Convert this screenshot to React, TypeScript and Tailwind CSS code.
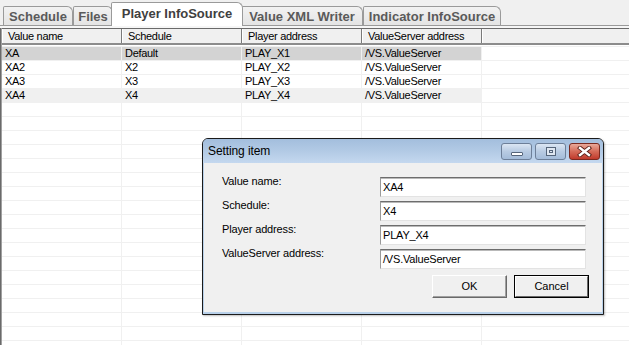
import React from "react";

const data = [
  ["XA", "Default", "PLAY_X1", "/VS.ValueServer"],
  ["XA2", "X2", "PLAY_X2", "/VS.ValueServer"],
  ["XA3", "X3", "PLAY_X3", "/VS.ValueServer"],
  ["XA4", "X4", "PLAY_X4", "/VS.ValueServer"],
];

function Tab({ w, children }: { w: string; children: React.ReactNode }) {
  return (
    <div
      className={`${w} h-[19px] border border-b-0 border-[#9a9a9a] rounded-tl-[2px] rounded-tr-[6px] bg-gradient-to-b from-[#f2f2f2] to-[#e4e4e4] flex items-center justify-center text-[13px] font-bold text-[#5a5a5a] leading-[17px] whitespace-nowrap`}
    >
      {children}
    </div>
  );
}

function Field({ label, value }: { label: string; value: string }) {
  return (
    <div className="flex items-start h-[23px]">
      <div className="w-[158px] h-[14px] leading-[14px] text-[11px] tracking-[-0.15px] text-black">{label}</div>
      <div className="mt-[3px] w-[206px] h-[20px] bg-white border border-t-[#6d6d6d] border-l-[#9a9a9a] border-r-[#e3e3e3] border-b-[#e3e3e3] shadow-[inset_0_1px_0_#b9b9b9] pl-[2px] flex items-center text-[11px] tracking-[-0.2px] text-black leading-[14px]">
        {value}
      </div>
    </div>
  );
}

export default function App() {
  const emptyRows = Array.from({ length: 20 }, (_, i) => i);
  return (
    <div className="relative w-[629px] h-[345px] overflow-hidden bg-[#f0f0f0] font-['Liberation_Sans',Arial,sans-serif]">
      {/* Tab strip */}
      <div className="flex items-end h-[26px] pl-[3px] border-b border-[#9a9a9a]">
        <Tab w="w-[70px]">Schedule</Tab>
        <Tab w="w-[40px]">Files</Tab>
        <div className="relative z-10 -mx-[2px] -mb-[1px] w-[132px] h-[24px] border border-b-0 border-[#9a9a9a] rounded-tl-[2px] rounded-tr-[6px] bg-white flex items-start justify-center pt-[3px] text-[13px] font-bold text-[#404040] leading-[16px] whitespace-nowrap">
          Player InfoSource
        </div>
        <Tab w="w-[122px]">Value XML Writer</Tab>
        <Tab w="w-[138px]">Indicator InfoSource</Tab>
      </div>
      <div className="h-[2px] bg-[#f6f6f6]" />

      {/* Grid */}
      <div className="border-l border-[#6a6a6a] h-[320px]">
        <div className="border-l border-[#a0a0a0] h-full bg-white">
          <div className="flex h-[17px] border-t border-[#6a6a6a] border-b-2 border-b-[#8c8c8c] bg-[#f0f0f0] text-[11px] tracking-[-0.3px] text-black leading-[14px]">
            {["Value name", "Schedule", "Player address", "ValueServer address"].map((h) => (
              <div key={h} className="w-[120px] border-l border-white border-r border-r-[#7a7a7a] pl-[5px] flex items-center">
                {h}
              </div>
            ))}
            <div className="flex-1 border-l border-white" />
          </div>
          <div className="h-[1px]" />
          <div className="border-t border-[#f0f0f0]">
            {data.map((r, i) => (
              <div
                key={i}
                className={`flex h-[14px] border-b border-[#f0f0f0] text-[11px] tracking-[-0.3px] text-black leading-[13px]`}
              >
                {r.map((c, j) => (
                  <div
                    key={j}
                    className={`w-[120px] border-r border-[#f0f0f0] pl-[3px] whitespace-nowrap ${
                      i === 0 ? "bg-[#d3d3d3]" : i === 3 ? "bg-[#f0f0f0]" : ""
                    }`}
                  >
                    {c}
                  </div>
                ))}
                <div className="flex-1" />
              </div>
            ))}
            {emptyRows.map((i) => (
              <div key={i} className="flex h-[14px] border-b border-[#f0f0f0]">
                <div className="w-[120px] border-r border-[#f0f0f0]" />
                <div className="w-[120px] border-r border-[#f0f0f0]" />
                <div className="w-[120px] border-r border-[#f0f0f0]" />
                <div className="w-[120px] border-r border-[#f0f0f0]" />
                <div className="flex-1" />
              </div>
            ))}
          </div>
        </div>
      </div>

      {/* Dialog */}
      <div className="absolute left-[202px] top-[138px] w-[402px] h-[177px] border border-[#1b1b1b] rounded-t-[6px] flex flex-col overflow-hidden bg-[#b9d1ea] shadow-[1px_1px_2px_rgba(0,0,0,0.25)]">
        <div className="h-[24px] flex items-start bg-gradient-to-b from-[#a3bedd] via-[#b2cae5] to-[#c4d8ef]">
          <div className="flex-1 pl-[5px] leading-[24px] text-[12px] text-black tracking-[-0.1px]">Setting item</div>
          <div className="flex gap-[3px] pt-[4px] pr-[3px]">
            <div className="w-[31px] h-[17px] rounded-[3px] border border-[#6d7f98] bg-gradient-to-b from-[#dbe6f3] via-[#b8cbe2] to-[#a4bcd9] flex items-end justify-center pb-[3px]">
              <div className="w-[12px] h-[4px] bg-white border border-[#55657a] rounded-[1px]" />
            </div>
            <div className="w-[31px] h-[17px] rounded-[3px] border border-[#6d7f98] bg-gradient-to-b from-[#dbe6f3] via-[#b8cbe2] to-[#a4bcd9] flex items-center justify-center">
              <div className="w-[10px] h-[9px] border border-[#55657a] bg-[#dfe7f1] flex items-center justify-center">
                <div className="w-[4px] h-[3px] border border-[#55657a]" />
              </div>
            </div>
            <div className="w-[31px] h-[17px] rounded-[3px] border border-[#7a2a20] bg-gradient-to-b from-[#e9a99a] via-[#d46a58] to-[#c0392b] flex items-center justify-center">
              <svg width="15" height="11" viewBox="0 0 15 11">
                <path d="M3 2 L12 9 M12 2 L3 9" stroke="#5a2018" strokeWidth="4.2" strokeLinecap="square" />
                <path d="M3 2 L12 9 M12 2 L3 9" stroke="#ffffff" strokeWidth="2.4" strokeLinecap="square" />
              </svg>
            </div>
          </div>
        </div>
        <div className="flex-1 mx-[1px] mb-[2px] bg-[#f0f0f0] pl-[18px] pt-[11px] flex flex-col">
          <div className="flex flex-col gap-[1px]">
            <Field label="Value name:" value="XA4" />
            <Field label="Schedule:" value="X4" />
            <Field label="Player address:" value="PLAY_X4" />
            <Field label="ValueServer address:" value="/VS.ValueServer" />
          </div>
          <div className="w-[367px] flex justify-end gap-[7px] mt-[6px]">
            <div className="w-[75px] h-[23px] bg-[#f0f0f0] border border-t-white border-l-white border-r-[#696969] border-b-[#696969] shadow-[inset_-1px_-1px_0_#a0a0a0] flex items-center justify-center text-[11px] text-black">
              OK
            </div>
            <div className="w-[75px] h-[23px] border border-black">
              <div className="w-full h-full bg-[#f0f0f0] border border-t-white border-l-white border-r-[#696969] border-b-[#696969] flex items-center justify-center text-[11px] text-black">
                Cancel
              </div>
            </div>
          </div>
        </div>
      </div>
    </div>
  );
}
